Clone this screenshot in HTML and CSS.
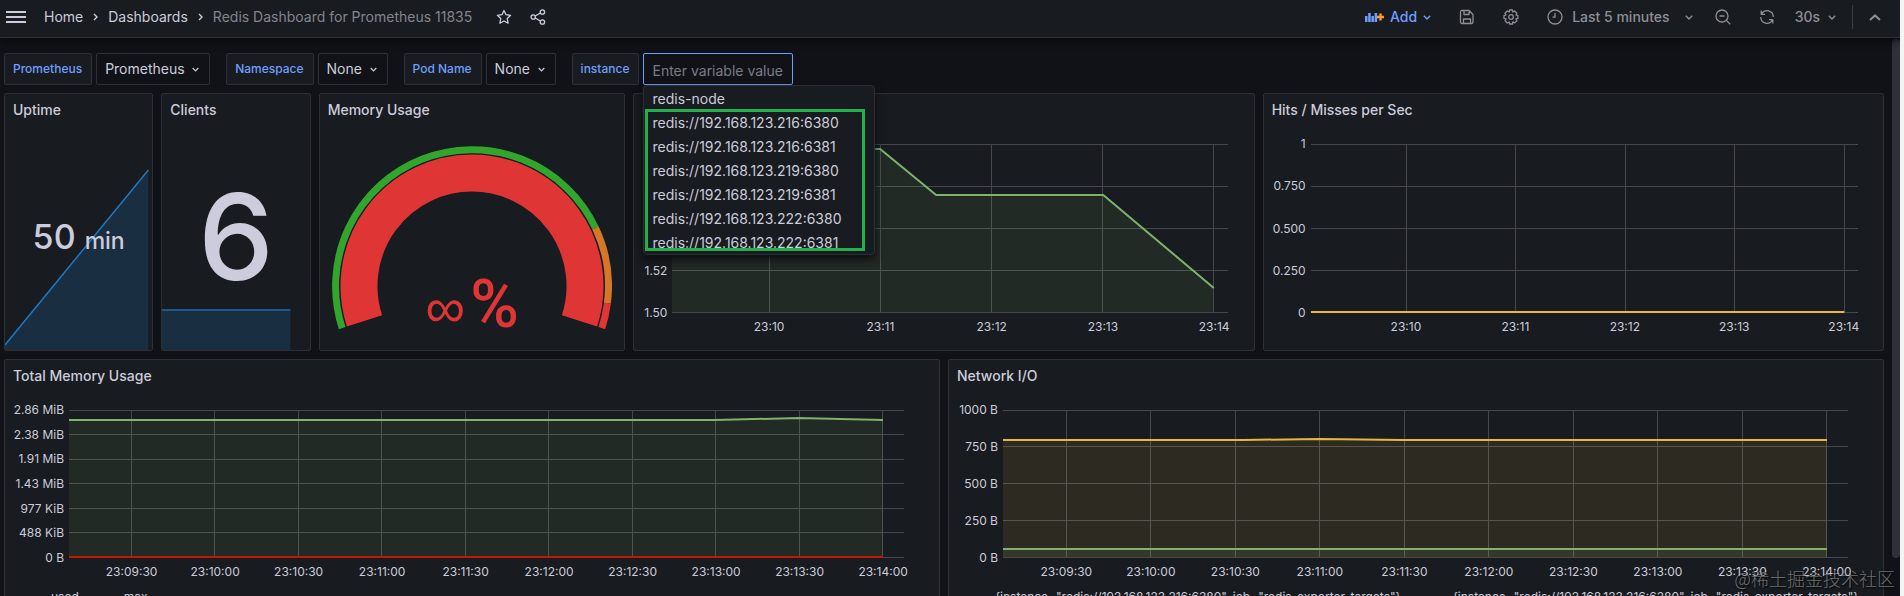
FILE: index.html
```html
<!DOCTYPE html>
<html lang="en">
<head>
<meta charset="utf-8">
<title>Redis Dashboard for Prometheus 11835</title>
<link rel="stylesheet" href="styles.css">
</head>
<body>
<header class="topbar">
  <button class="icon-btn menu-btn" aria-label="Open menu">
    <svg width="20" height="14" viewBox="0 0 20 14" stroke="currentColor" stroke-width="2"><path d="M0 2h20M0 7h20M0 12h20"/></svg>
  </button>
  <nav class="crumbs" aria-label="Breadcrumb">
    <a href="#">Home</a>
    <svg class="sep" width="5" height="8" viewBox="0 0 5 8"><path d="M1 1l3 3-3 3"/></svg>
    <a href="#">Dashboards</a>
    <svg class="sep" width="5" height="8" viewBox="0 0 5 8"><path d="M1 1l3 3-3 3"/></svg>
    <span class="current">Redis Dashboard for Prometheus 11835</span>
  </nav>
  <button class="icon-btn star-btn" aria-label="Mark as favorite">
    <svg class="line" width="16" height="16" viewBox="0 0 16 16"><path d="M8 1.5l2 4.2 4.6.6-3.400 3.200.9 4.700L8 12l-4.100 2.200.9-4.700L1.400 6.300 6 5.700z"/></svg>
  </button>
  <button class="icon-btn" aria-label="Share dashboard">
    <svg class="line" width="16" height="16" viewBox="0 0 16 16"><circle cx="3.200" cy="8" r="2.200"/><circle cx="12.400" cy="3" r="2.200"/><circle cx="12.400" cy="13" r="2.200"/><path d="M5.200 7l5.200-3M5.200 9l5.200 3"/></svg>
  </button>
  <div class="actions">
    <button class="text-btn add">
      <svg width="19" height="12" viewBox="0 0 19 12"><path fill="#6e9fff" d="M0 5h2.500v6H0zM3.200 2h2.500v9H3.200zM6.400 5h2.500v6H6.400zM9.600 2h2.500v9H9.600z"/><path fill="#ff9830" d="M14.300 2.500h2.400v2.300H19v2.400h-2.300v2.300h-2.400V7.200H12V4.800h2.300z"/></svg>
      <span>Add</span>
      <svg class="chev" width="8" height="5" viewBox="0 0 8 5"><path d="M.8.8L4 4 7.200.8"/></svg>
    </button>
    <button class="icon-btn" aria-label="Save dashboard">
      <svg class="line" width="16" height="16" viewBox="0 0 16 16"><path d="M2.500 1.500h7.500l4 4v7.500a1.500 1.500 0 0 1-1.500 1.500h-9.500A1.500 1.500 0 0 1 1.500 13V3a1.500 1.500 0 0 1 1-1.500zM5 1.500v4h5v-3M4.500 14.500V10h7v4.500"/></svg>
    </button>
    <button class="icon-btn" aria-label="Dashboard settings">
      <svg class="line" width="16" height="16" viewBox="0 0 16 16"><path d="M6.600 1h2.800l.5 2 1.700-1 2.300 2.300-1 1.700 2 .6v2.800l-2 .5 1 1.800-2.300 2.200-1.700-1-.5 2.100H6.600l-.5-2-1.800 1-2.200-2.300 1-1.800-2.100-.5V6.600l2-.6-1-1.700L4.300 2l1.800 1z"/><circle cx="8" cy="8" r="2.300"/></svg>
    </button>
    <button class="text-btn range">
      <svg class="line" width="16" height="16" viewBox="0 0 16 16"><circle cx="8" cy="8" r="7"/><path d="M8 4v4.200H5.500"/></svg>
      <span>Last 5 minutes</span>
      <svg class="chev" width="8" height="5" viewBox="0 0 8 5"><path d="M.8.8L4 4 7.200.8"/></svg>
    </button>
    <button class="icon-btn" aria-label="Zoom out">
      <svg class="line" width="16" height="16" viewBox="0 0 16 16"><circle cx="7" cy="7" r="6"/><path d="M4.500 7h5M11.400 11.400l3.800 3.800"/></svg>
    </button>
    <button class="text-btn refresh">
      <svg class="line" width="16" height="16" viewBox="0 0 16 16"><path d="M2.200 1.500v3.800H6M2.500 5A6.300 6.300 0 0 1 14.300 8M13.800 14.500v-3.800H10M13.500 11A6.300 6.300 0 0 1 1.700 8"/></svg>
      <span>30s</span>
      <svg class="chev" width="8" height="5" viewBox="0 0 8 5"><path d="M.8.8L4 4 7.200.8"/></svg>
    </button>
    <span class="divider"></span>
    <button class="icon-btn fold" aria-label="Hide top bar">
      <svg width="12" height="7" viewBox="0 0 12 7" fill="none" stroke="currentColor" stroke-width="2"><path d="M1 6l5-4.600L11 6"/></svg>
    </button>
  </div>
</header>

<main class="page">
  <form class="vars">
    <div class="var">
      <label for="v-ds">Prometheus</label>
      <span class="picker"><select id="v-ds"><option>Prometheus</option></select><svg class="chev" width="7" height="5" viewBox="0 0 8 5"><path d="M.8.8L4 4 7.200.8"/></svg></span>
    </div>
    <div class="var">
      <label for="v-ns">Namespace</label>
      <span class="picker"><select id="v-ns"><option>None</option></select><svg class="chev" width="7" height="5" viewBox="0 0 8 5"><path d="M.8.8L4 4 7.200.8"/></svg></span>
    </div>
    <div class="var">
      <label for="v-pod">Pod Name</label>
      <span class="picker"><select id="v-pod"><option>None</option></select><svg class="chev" width="7" height="5" viewBox="0 0 8 5"><path d="M.8.8L4 4 7.200.8"/></svg></span>
    </div>
    <div class="var">
      <label for="v-inst">instance</label>
      <div class="combo">
        <input id="v-inst" type="text" placeholder="Enter variable value">
        <ul class="options">
          <li>redis-node</li>
          <li>redis://192.168.123.216:6380</li>
          <li>redis://192.168.123.216:6381</li>
          <li>redis://192.168.123.219:6380</li>
          <li>redis://192.168.123.219:6381</li>
          <li>redis://192.168.123.222:6380</li>
          <li>redis://192.168.123.222:6381</li>
        </ul>
        <span class="marker"></span>
      </div>
    </div>
  </form>

  <div class="grid">
    <section class="panel w2">
      <h2>Uptime</h2>
      <div class="stat">
        <svg class="spark" viewBox="0 0 148 182" preserveAspectRatio="none"><path class="spark-fill" d="M0 177L144 2V182H0z"/><path class="spark-line thin" d="M0 177L144 2"/></svg>
        <div class="value mid">50 <small>min</small></div>
      </div>
    </section>
    <section class="panel w2">
      <h2>Clients</h2>
      <div class="stat">
        <svg class="spark" viewBox="0 0 148 182" preserveAspectRatio="none"><path class="spark-fill" d="M0 142H129V182H0z"/><path class="spark-line flat" d="M0 142H129"/></svg>
        <div class="value big">6</div>
      </div>
    </section>
    <section class="panel w4">
      <h2>Memory Usage</h2>
      <div class="gauge">
        <svg viewBox="0 0 280 185" width="280" height="185" fill="none">
          <path stroke="#32a52d" stroke-width="7" d="M10.200 182.200A136.500 136.500 0 0 1 263.500 81.900"/>
          <path stroke="#d67727" stroke-width="7" d="M263.500 81.900A136.500 136.500 0 0 1 275.400 157.100"/>
          <path stroke="#e03535" stroke-width="7" d="M275.400 157.100A136.500 136.500 0 0 1 269.800 182.200"/>
          <path stroke="#e03535" stroke-width="37" d="M32.500 174.900A113 113 0 1 1 247.500 174.900"/>
          <text x="140" y="181" text-anchor="middle" class="gauge-text"><tspan class="gauge-number">∞</tspan><tspan dx="5">%</tspan></text>
        </svg>
      </div>
    </section>
    <section class="panel w8">
      <h2>C</h2>
      <div class="chart c-commands">
        <div class="yaxis"><span>1.58</span><span>1.56</span><span>1.54</span><span>1.52</span><span>1.50</span></div>
        <svg class="plot tall" viewBox="0 0 556 169" preserveAspectRatio="none">
          <path class="area green" d="M0 5H208L264 51H431L541 144V168H0z"/>
          <path class="rule" d="M0 .5H556M0 42.500H556M0 84.500H556M0 126.500H556M0 168.500H556M97.500 0V168M208.500 0V168M319.500 0V168M430.500 0V168M541.500 0V168"/>
          <path class="series green" d="M0 5H208L264 51H431L541.500 144"/>
        </svg>
        <div class="xaxis minutes"><span>23:10</span><span>23:11</span><span>23:12</span><span>23:13</span><span>23:14</span></div>
      </div>
    </section>
    <section class="panel w8">
      <h2>Hits / Misses per Sec</h2>
      <div class="chart c-hits">
        <div class="yaxis"><span>1</span><span>0.750</span><span>0.500</span><span>0.250</span><span>0</span></div>
        <svg class="plot tall" viewBox="0 0 547 169" preserveAspectRatio="none">
          <path class="rule" d="M0 .5H547M0 42.500H547M0 84.500H547M0 126.500H547M0 168.500H547M95.500 0V168M204.500 0V168M314.500 0V168M423.500 0V168M533.500 0V168"/>
          <path class="series yellow" d="M0 168H533"/>
        </svg>
        <div class="xaxis minutes"><span>23:10</span><span>23:11</span><span>23:12</span><span>23:13</span><span>23:14</span></div>
      </div>
    </section>

    <section class="panel w12">
      <h2>Total Memory Usage</h2>
      <div class="chart c-memory">
        <div class="yaxis"><span>2.86 MiB</span><span>2.38 MiB</span><span>1.91 MiB</span><span>1.43 MiB</span><span>977 KiB</span><span>488 KiB</span><span>0 B</span></div>
        <svg class="plot" viewBox="0 0 835 148" preserveAspectRatio="none">
          <path class="area green" d="M0 10H646L730 8L814 10V147H0z"/>
          <path class="rule" d="M0 .5H835M0 24.500H835M0 49.500H835M0 73.500H835M0 98.500H835M0 122.500H835M0 147.500H835M62.500 0V147M145.500 0V147M229.500 0V147M312.500 0V147M396.500 0V147M479.500 0V147M563.500 0V147M646.500 0V147M730.500 0V147M813.500 0V147"/>
          <path class="series green" d="M0 10H646L730 8L814 10"/>
          <path class="series red" d="M0 147H814"/>
        </svg>
        <div class="xaxis halves"><span>23:09:30</span><span>23:10:00</span><span>23:10:30</span><span>23:11:00</span><span>23:11:30</span><span>23:12:00</span><span>23:12:30</span><span>23:13:00</span><span>23:13:30</span><span>23:14:00</span></div>
      </div>
      <div class="legend"><span>used</span><span>max</span></div>
    </section>
    <section class="panel w12">
      <h2>Network I/O</h2>
      <div class="chart c-network">
        <div class="yaxis"><span>1000 B</span><span>750 B</span><span>500 B</span><span>250 B</span><span>0 B</span></div>
        <svg class="plot" viewBox="0 0 845 148" preserveAspectRatio="none">
          <path class="area yellow" d="M0 30H240L316 29L400 30H824V147H0z"/>
          <path class="area green" d="M0 139H824V147H0z"/>
          <path class="rule" d="M0 .5H845M0 36.500H845M0 73.500H845M0 110.500H845M0 147.500H845M63.500 0V147M147.500 0V147M232.500 0V147M316.500 0V147M401.500 0V147M485.500 0V147M570.500 0V147M654.500 0V147M739.500 0V147M823.500 0V147"/>
          <path class="series yellow" d="M0 30H240L316 29L400 30H824"/>
          <path class="series green" d="M0 139H824"/>
        </svg>
        <div class="xaxis halves"><span>23:09:30</span><span>23:10:00</span><span>23:10:30</span><span>23:11:00</span><span>23:11:30</span><span>23:12:00</span><span>23:12:30</span><span>23:13:00</span><span>23:13:30</span><span>23:14:00</span></div>
      </div>
      <div class="legend wide"><span>{instance="redis://192.168.123.216:6380", job="redis_exporter_targets"}</span><span>{instance="redis://192.168.123.216:6380", job="redis_exporter_targets"}</span></div>
    </section>
  </div>
  <div class="scrollbar"></div>
</main>
<div class="watermark">@稀土掘金技术社区</div>
</body>
</html>
```

FILE: styles.css
```css
* { box-sizing: border-box; }

body {
  margin: 0;
  height: 100vh;
  overflow: hidden;
  display: flex;
  flex-direction: column;
  background: #111217;
  border-right: 4px solid #f4f4f5;
  color: #ccccdc;
  font: 400 14px/20px Inter, "Liberation Sans", sans-serif;
}

button, input, select { font: inherit; color: inherit; }
svg { display: block; flex: none; }
a { color: inherit; text-decoration: none; }

/* Top bar */
.topbar {
  display: flex;
  align-items: center;
  height: 38px;
  padding: 0 19px 3px 6px;
  background: #181b1f;
  border-bottom: 1px solid #2c2f34;
  box-shadow: 0 2px 8px #08090c;
  z-index: 2;
}
.icon-btn, .text-btn {
  display: flex;
  align-items: center;
  padding: 0;
  border: 0;
  background: none;
}
.menu-btn { margin-right: 18px; }
.crumbs { display: flex; align-items: center; gap: 10px; white-space: nowrap; }
.current { color: #84848f; }
.sep, .chev { fill: none; stroke: currentColor; stroke-width: 1.4; }
.line { fill: none; stroke: currentColor; stroke-width: 1.3; stroke-linejoin: round; }
.star-btn { margin: 0 18px 0 24px; }
.actions {
  display: flex;
  align-items: center;
  gap: 28px;
  margin-left: auto;
  color: #8e8e99;
  font-weight: 500;
  white-space: nowrap;
}
.add { color: #6e9fff; gap: 6px; }
.range { gap: 9px; }
.range .chev { margin-left: 6px; }
.range + .icon-btn { margin-left: -6px; }
.refresh { gap: 8px; }
.refresh span { margin-left: 12px; }
.divider { width: 1px; height: 24px; margin: 0 -12px; background: #3a3c42; }

/* Variables row */
.page { flex: 1; min-height: 0; overflow: hidden; position: relative; padding: 15px 16px 0 4px; }
.vars { display: flex; gap: 16px; margin: 0; }
.var { display: flex; gap: 4px; }
.var label {
  display: flex;
  align-items: center;
  height: 32px;
  padding: 0 9px 0 8px;
  background: #181b1f;
  border: 1px solid #2c2f34;
  border-radius: 2px;
  color: #6e9fff;
  font-size: 12px;
  font-weight: 500;
}
.picker { display: grid; align-items: center; }
.picker > * { grid-area: 1 / 1; }
.picker .chev { justify-self: end; margin-right: 11px; pointer-events: none; }
.picker select {
  appearance: none;
  height: 32px;
  padding: 0 24px 0 8px;
  background: #111217;
  border: 1px solid #2f3136;
  border-radius: 2px;
}
.combo { position: relative; }
.combo input {
  display: block;
  width: 150px;
  height: 32px;
  padding: 2px 8px 0;
  background: #111217;
  border: 1px solid #6e9fff;
  border-radius: 2px;
  outline: 0;
}
.combo input::placeholder { color: #7b7b86; opacity: 1; }
.options {
  position: absolute;
  top: 32px;
  left: 0;
  z-index: 1;
  width: 232px;
  height: 170px;
  margin: 0;
  padding: 1px 0 0;
  overflow: hidden;
  list-style: none;
  background: #181b1f;
  border: 1px solid #2c2f34;
  border-radius: 4px;
  box-shadow: 0 4px 8px #0b0c0f;
}
.options li { padding: 0 8px; line-height: 24px; }
.marker {
  position: absolute;
  top: 56px;
  left: 2px;
  z-index: 1;
  width: 220px;
  height: 142px;
  border: 3px solid #22b14c;
}

/* Panels */
.grid {
  display: grid;
  grid-template-columns: repeat(24, minmax(0, 1fr));
  grid-auto-rows: 258px;
  gap: 8px;
  margin-top: 8px;
}
.panel {
  display: flex;
  flex-direction: column;
  min-width: 0;
  background: #181b1f;
  border: 1px solid #2c2f34;
  border-radius: 2px;
}
.w2 { grid-column: span 2; }
.w4 { grid-column: span 4; }
.w8 { grid-column: span 8; }
.w12 { grid-column: span 12; }
.panel h2 { margin: 0; padding: 0 8px; font-size: 14px; font-weight: 500; line-height: 32px; }

.stat { flex: 1; display: grid; align-items: center; justify-items: center; }
.stat > * { grid-area: 1 / 1; }
.spark { width: 100%; height: 182px; align-self: end; }
.spark-fill { fill: #1a2e41; }
.spark-line { fill: none; stroke: #1f78c1; vector-effect: non-scaling-stroke; }
.thin { stroke-width: 1.5; }
.flat { stroke: #1c588b; stroke-width: 2; }
.value { padding-bottom: 2px; font-weight: 500; line-height: 1; white-space: nowrap; z-index: 0; }
.mid { font-size: 34px; }
.mid small { font-size: 23px; }
.big { font-size: 120px; }

.gauge { display: flex; justify-content: center; padding-top: 20px; }
.gauge-text { fill: #e03535; font: 500 66px Roboto, sans-serif; }
.gauge-number { font: 400 56px "Liberation Sans", sans-serif; }

/* Charts */
.chart {
  display: grid;
  grid-template-columns: auto minmax(0, 1fr);
  padding-top: 18px;
  font-size: 12px;
  line-height: 16px;
}
.c-commands { grid-template-columns: 38px minmax(0, 1fr); padding-right: 25px; }
.c-hits { grid-template-columns: 47px minmax(0, 1fr); padding-right: 25px; }
.c-memory { grid-template-columns: 64px minmax(0, 1fr); padding-right: 35px; }
.c-network { grid-template-columns: 54px minmax(0, 1fr); padding-right: 35px; }
.yaxis {
  display: flex;
  flex-direction: column;
  justify-content: space-between;
  margin: -8px 0;
  padding-right: 5px;
  text-align: right;
  white-space: nowrap;
}
.plot { width: 100%; height: 148px; overflow: visible; }
.plot.tall { height: 169px; }
.xaxis { grid-column: 2; display: flex; margin-top: 6px; }
.xaxis span { flex: 1 1 0; text-align: center; }
.minutes { margin-left: 7.4%; margin-right: -7.4%; }
.halves { margin-left: 2.5%; margin-right: -2.5%; }
.rule {
  fill: none;
  stroke: rgba(255, 255, 255, 0.2);
  stroke-width: 1;
  shape-rendering: crispEdges;
  vector-effect: non-scaling-stroke;
}
.area.green { fill: rgba(126, 178, 109, 0.1); }
.area.yellow { fill: rgba(234, 184, 57, 0.1); }
.series { fill: none; stroke-width: 2; vector-effect: non-scaling-stroke; }
.series.green { stroke: #7eb26d; }
.series.yellow { stroke: #eab839; }
.series.red { stroke: #bf1b00; }
.legend {
  display: flex;
  gap: 45px;
  margin-top: 9px;
  padding-left: 46px;
  font-size: 12px;
  line-height: 16px;
  white-space: nowrap;
}
.legend.wide { gap: 52px; }

.scrollbar {
  position: absolute;
  top: 1px;
  right: 0;
  width: 8px;
  height: 93%;
  border-radius: 4px;
  background: #303136;
}
.watermark {
  position: absolute;
  right: 9px;
  bottom: 5px;
  z-index: 3;
  color: rgba(255, 255, 255, 0.4);
  font: 300 18px/26px "Noto Sans CJK SC", sans-serif;
  text-shadow: 1px 1px 2px #000;
}
```
